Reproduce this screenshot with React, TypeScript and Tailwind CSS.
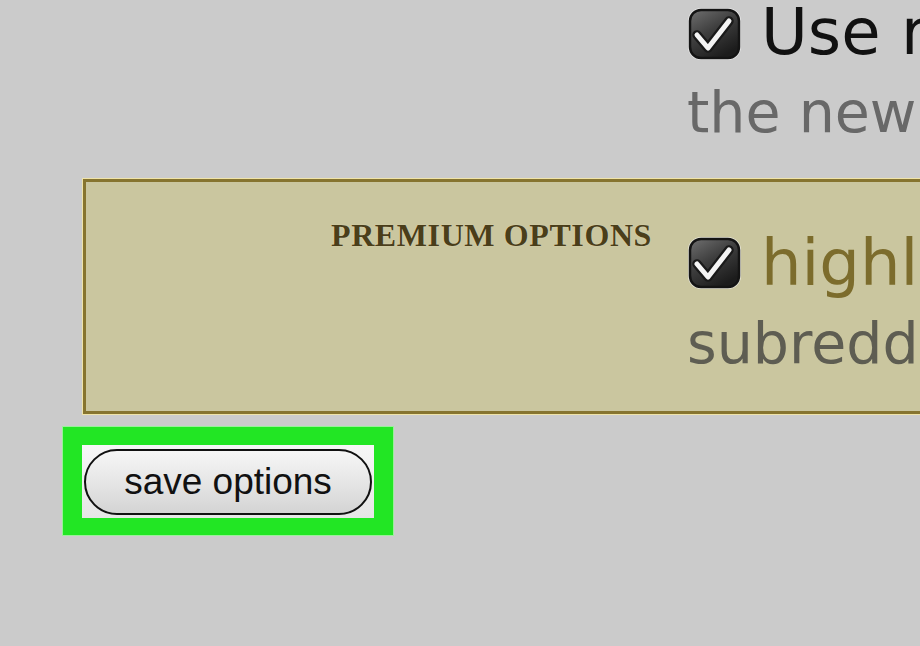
import React from "react";

function CheckBox({ className = "" }: { className?: string }) {
  return (
    <svg className={className} width="55" height="54" viewBox="0 0 55 54">
      <defs>
        <linearGradient id="cbFill" x1="0" y1="0" x2="0.6" y2="1">
          <stop offset="0" stopColor="#707070" />
          <stop offset="0.5" stopColor="#3e3e3e" />
          <stop offset="1" stopColor="#1c1c1c" />
        </linearGradient>
      </defs>
      <rect x="1" y="1" width="53" height="52" rx="13" fill="#f2f2f2" opacity="0.7" />
      <rect x="3" y="3" width="49" height="48" rx="11" fill="url(#cbFill)" stroke="#141414" strokeWidth="2.5" />
      <path d="M10 28 L21 41 L42 14" fill="none" stroke="#1a1a1a" strokeWidth="9.5" strokeLinecap="round" strokeLinejoin="round" />
      <path d="M10 28 L21 41 L42 14" fill="none" stroke="#f4f4f4" strokeWidth="5" strokeLinecap="round" strokeLinejoin="round" />
    </svg>
  );
}

export default function App() {
  return (
    <div className="flex h-[646px] w-[920px] flex-col overflow-hidden bg-[#cbcbcb] font-['DejaVu_Sans',sans-serif]">
      <section className="flex h-[179px] flex-col pl-[687px]">
        <div className="flex items-start gap-[19px] whitespace-nowrap">
          <CheckBox className="mt-[7px] shrink-0" />
          <span className="text-[64px] leading-[64px] text-[#111]">Use redesign as my default</span>
        </div>
        <div className="mt-[20px] whitespace-nowrap text-[57px] leading-[57px] text-[#686868]">
          the new reddit experience
        </div>
      </section>

      <section className="ml-[83px] flex h-[235px] w-[860px] shrink-0 border-[3px] border-[#86742f] bg-[#cac69f] shadow-[0_0_0_1px_#efe3a8]">
        <div className="w-[566px] shrink-0 pt-[37px] text-right font-['Liberation_Serif',serif] text-[32px] font-bold leading-none tracking-[0.6px] text-[#4a3e1a] [text-shadow:0_0_1px_#eee6c4]">
          PREMIUM OPTIONS
        </div>
        <div className="ml-[35px] flex flex-col pt-[49px]">
          <div className="flex items-start gap-[19px] whitespace-nowrap">
            <CheckBox className="mt-[5px] shrink-0" />
            <span className="text-[64px] leading-[64px] text-[#7c6c2c]">highlight new comments</span>
          </div>
          <div className="mt-[20px] whitespace-nowrap text-[57px] leading-[57px] text-[#5e5d52]">
            subreddit themes
          </div>
        </div>
      </section>

      <div className="ml-[63px] mt-[13px] flex h-[108px] w-[330px] shrink-0 bg-[#22e624] px-[19px] pb-[17px] pt-[18px] shadow-[0_0_0_1px_#9af09a]">
        <div className="flex flex-1 items-center justify-center bg-gradient-to-b from-[#f7f7f7] to-[#e6e6e6] px-[2px]">
          <button
            type="button"
            className="flex h-[66px] w-full items-center justify-center rounded-full border-2 border-[#111] bg-gradient-to-b from-[#f6f6f6] via-[#e6e6e6] to-[#d4d4d4] font-['Liberation_Sans',sans-serif] text-[37px] leading-none text-[#111]"
          >
            save options
          </button>
        </div>
      </div>
    </div>
  );
}
